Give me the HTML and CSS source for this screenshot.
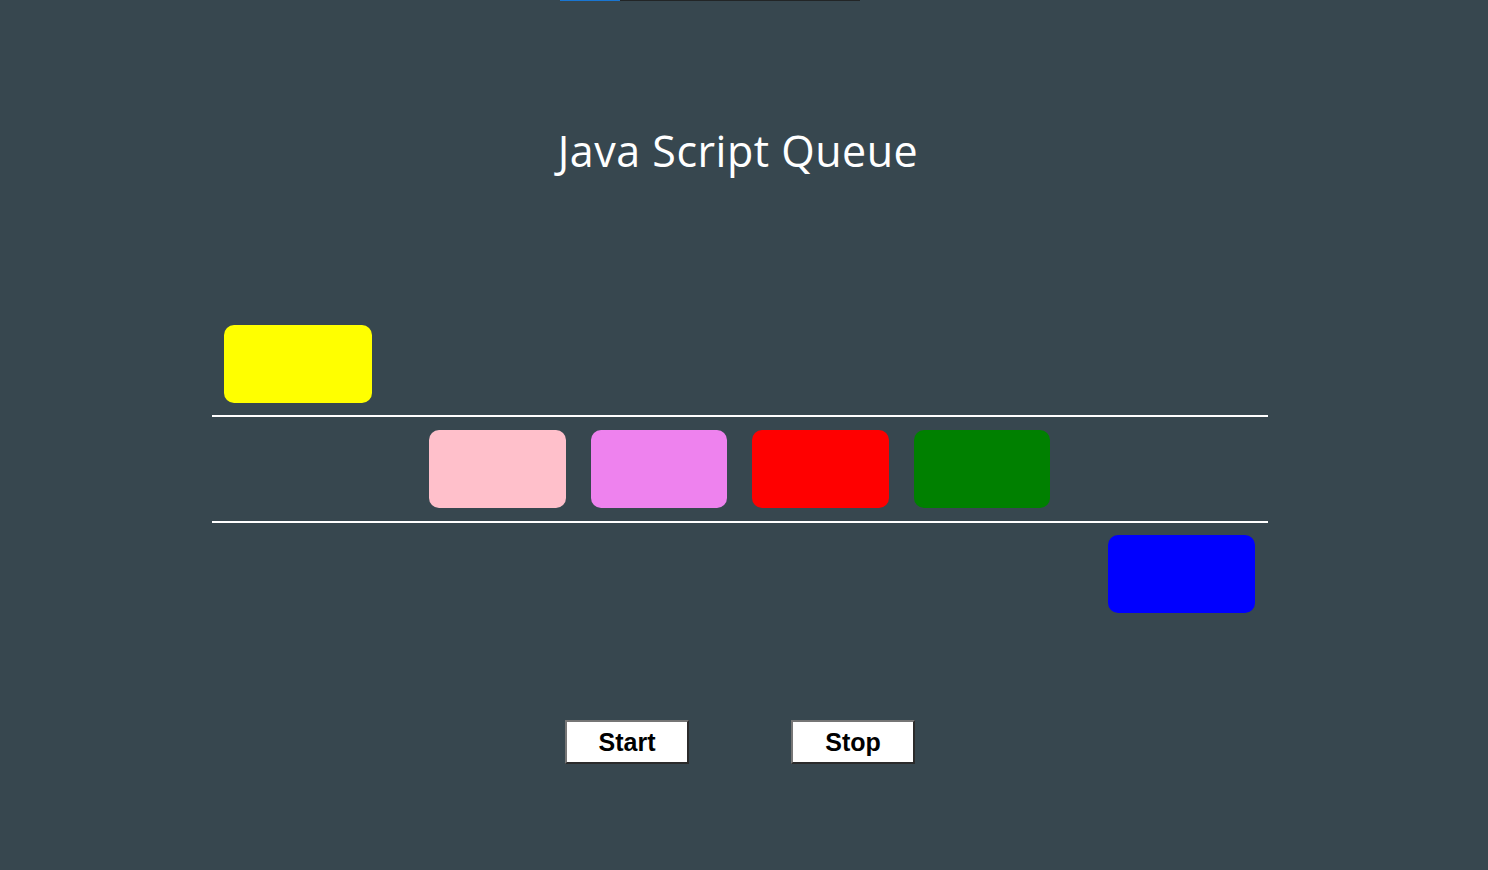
FILE: index.html
```html
<!DOCTYPE html>
<html lang="en">
<head>
<meta charset="utf-8">
<title>Java Script Queue</title>
<link rel="stylesheet" href="styles.css">
</head>
<body>
<div class="progress"><div class="progress-fill"></div></div>
<main class="stage">
  <h1 class="title">Java Script Queue</h1>
  <section class="queue">
    <div class="lane lane-in">
      <div class="box box-wide yellow"></div>
    </div>
    <div class="lane lane-queue">
      <div class="box box-a pink"></div>
      <div class="box box-b violet"></div>
      <div class="box box-a red"></div>
      <div class="box box-b green"></div>
    </div>
    <div class="lane lane-out">
      <div class="box box-out blue"></div>
    </div>
  </section>
  <div class="controls">
    <button class="btn">Start</button>
    <button class="btn">Stop</button>
  </div>
</main>
</body>
</html>
```

FILE: styles.css
```css
html, body {
  margin: 0;
  padding: 0;
  background: #37474f;
  height: 100%;
  overflow: hidden;
}

.progress {
  display: flex;
  margin-left: 560px;
  width: 300px;
  height: 1px;
  background: #222526;
}

.progress-fill {
  width: 60px;
  height: 100%;
  background: #1976d2;
}

.stage {
  width: 1056px;
  margin-left: 212px;
}

.title {
  margin: 0;
  padding-top: 124px;
  height: 60px;
  font-family: "Open Sans", "Noto Sans", sans-serif;
  font-weight: 400;
  font-size: 43px;
  line-height: 52px;
  color: #ffffff;
  text-align: center;
  letter-spacing: 0.5px;
  padding-right: 4px;
}

.queue {
  margin-top: 140px;
}

.lane {
  display: flex;
}

.lane-in {
  padding-left: 12px;
  padding-bottom: 12px;
  border-bottom: 2px solid #ffffff;
}

.lane-queue {
  padding: 13px 0 13px 217px;
  gap: 25px;
  border-bottom: 2px solid #ffffff;
}

.lane-out {
  justify-content: flex-end;
  padding-top: 12px;
  padding-right: 13px;
}

.box {
  height: 78px;
  border-radius: 10px;
}

.box-wide { width: 148px; }
.box-a { width: 137px; }
.box-b { width: 136px; }
.box-out { width: 147px; }

.yellow { background: #ffff00; }
.pink { background: #ffc0cb; }
.violet { background: #ee82ee; }
.red { background: #ff0000; }
.green { background: #008000; }
.blue { background: #0000ff; }

.controls {
  display: flex;
  gap: 102px;
  margin-top: 107px;
  margin-left: 353px;
}

.btn {
  box-sizing: border-box;
  width: 124px;
  height: 44px;
  padding: 0;
  background: #ffffff;
  color: #000000;
  font-family: "Liberation Sans", Arial, sans-serif;
  font-weight: 700;
  font-size: 25px;
  border-style: solid;
  border-width: 2px;
  border-color: #767676 #2b2b2b #2b2b2b #767676;
}
```
